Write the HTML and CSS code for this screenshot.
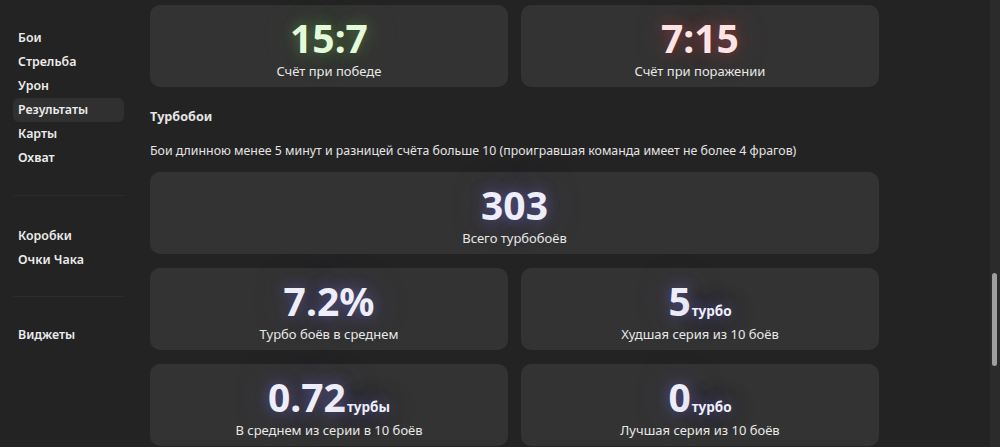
FILE: index.html
```html
<!DOCTYPE html>
<html lang="ru">
<head>
  <meta charset="UTF-8">
  <title>Результаты</title>
  <link rel="stylesheet" href="styles.css">
</head>
<body>
  <div class="app">
    <nav class="sidebar">
      <ul class="menu">
        <li>Бои</li>
        <li>Стрельба</li>
        <li>Урон</li>
        <li class="active">Результаты</li>
        <li>Карты</li>
        <li>Охват</li>
      </ul>
      <hr class="divider">
      <ul class="menu">
        <li>Коробки</li>
        <li>Очки Чака</li>
      </ul>
      <hr class="divider tight">
      <ul class="menu">
        <li>Виджеты</li>
      </ul>
    </nav>

    <main class="content">
      <div class="grid">
        <div class="card">
          <div class="value win">15:7</div>
          <div class="label">Счёт при победе</div>
        </div>
        <div class="card">
          <div class="value lose">7:15</div>
          <div class="label">Счёт при поражении</div>
        </div>
      </div>

      <h4 class="section-title">Турбобои</h4>
      <p class="section-desc">Бои длинною менее 5 минут и разницей счёта больше 10 (проигравшая команда имеет не более 4 фрагов)</p>

      <div class="grid">
        <div class="card wide">
          <div class="value">303</div>
          <div class="label">Всего турбобоёв</div>
        </div>
        <div class="card">
          <div class="value">7.2%</div>
          <div class="label">Турбо боёв в среднем</div>
        </div>
        <div class="card">
          <div class="value">5<span class="unit">турбо</span></div>
          <div class="label">Худшая серия из 10 боёв</div>
        </div>
        <div class="card">
          <div class="value">0.72<span class="unit">турбы</span></div>
          <div class="label">В среднем из серии в 10 боёв</div>
        </div>
        <div class="card">
          <div class="value">0<span class="unit">турбо</span></div>
          <div class="label">Лучшая серия из 10 боёв</div>
        </div>
      </div>
    </main>

    <div class="scrollbar"><div class="thumb"></div></div>
  </div>
</body>
</html>
```

FILE: styles.css
```css
html, body {
  margin: 0;
  height: 100%;
  overflow: hidden;
}

body {
  background: #232323;
  color: #e6e6e6;
  font-family: "Noto Sans", "Open Sans", Arial, sans-serif;
  font-size: 13px;
}

.app {
  display: grid;
  grid-template-columns: 140px 1fr 10px;
  height: 100%;
}

/* sidebar */
.sidebar {
  padding: 26px 16px 0 13px;
}

.menu {
  list-style: none;
  margin: 0;
  padding: 0;
}

.menu li {
  height: 24px;
  line-height: 23px;
  padding-left: 5px;
  border-radius: 6px;
  font-size: 12.4px;
  font-weight: 600;
  color: #ececec;
}

.menu li.active {
  background: #303030;
}

.divider {
  border: none;
  border-top: 1px solid #2c2c2c;
  margin: 25px 0 28px;
}

.divider.tight {
  margin: 24px 0 26px;
}

/* main */
.content {
  padding: 5px 0 0 10px;
  width: 729px;
}

.grid {
  display: grid;
  grid-template-columns: 1fr 1fr;
  gap: 14px 13px;
}

.card {
  height: 82px;
  background: #333333;
  border-radius: 10px;
  display: flex;
  flex-direction: column;
  align-items: center;
}

.card.wide {
  grid-column: span 2;
}

.value {
  margin-top: 13px;
  height: 40px;
  font-size: 39px;
  line-height: 40px;
  font-weight: 700;
  color: #eeeefa;
  text-shadow: 0 0 14px rgba(120, 110, 230, 0.5), 0 0 36px rgba(100, 90, 210, 0.35);
}

.value.win {
  color: #e4fbd9;
  text-shadow: 0 0 14px rgba(120, 210, 90, 0.4), 0 0 36px rgba(100, 180, 70, 0.3);
}

.value.lose {
  color: #ffe4e6;
  text-shadow: 0 0 14px rgba(230, 70, 80, 0.45), 0 0 36px rgba(210, 60, 70, 0.3);
}

.unit {
  font-size: 13.5px;
  line-height: 1;
  margin-left: 1px;
}

.label {
  margin-top: 4px;
  line-height: 18px;
  color: #e8e8e8;
}

.section-title {
  margin: 21px 0 0;
  font-size: 12.6px;
  line-height: 18px;
  font-weight: 700;
}

.section-desc {
  margin: 16px 0 12px;
  font-size: 12.35px;
  line-height: 18px;
  color: #e4e4e4;
}

/* scrollbar */
.scrollbar {
  background: #2b2b2b;
  padding: 273px 3px 0 2px;
}

.thumb {
  height: 93px;
  background: #9e9e9e;
  border-radius: 3px;
}
```
